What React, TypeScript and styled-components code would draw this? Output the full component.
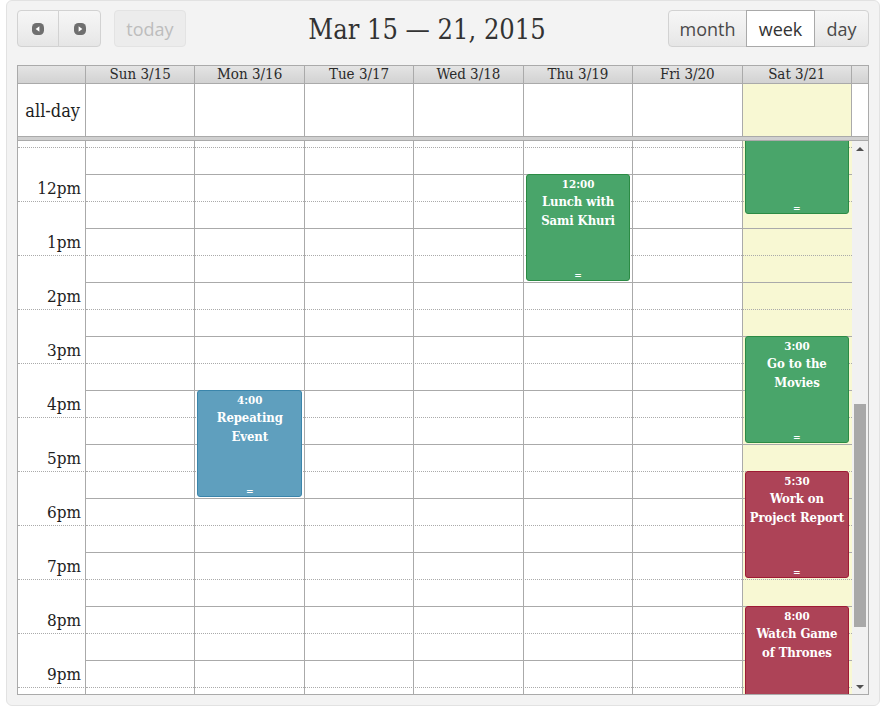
import React, { useLayoutEffect, useRef } from 'react';
import styled, { createGlobalStyle } from 'styled-components';

const SLAB = `"DejaVu Serif", "Liberation Serif", serif`;
const SANS = `"Open Sans", "DejaVu Sans", sans-serif`;

const SLOT = 27;
const HOUR = SLOT * 2;
const MIN_HOUR = 11;
const MAX_HOUR = 22;
const CONTENT_H = (MAX_HOUR - MIN_HOUR) * HOUR;
const VIEW_H = 553;
const SCROLL_TOP = 21;
const ARROW_H = 15;
const TRACK_H = VIEW_H - ARROW_H * 2;
/* scrollbar is drawn for the whole day (24h), scrolled to the same spot */
const DAY_H = 24 * HOUR;
const DAY_SCROLL = MIN_HOUR * HOUR + SCROLL_TOP;

const GlobalStyle = createGlobalStyle`
  html, body { margin: 0; padding: 0; background: #fff; }
  body { font-family: ${SLAB}; }
  * { box-sizing: border-box; }
`;

const Panel = styled.div`
  margin-left: 6px;
  width: 874px;
  height: 706px;
  background: #f3f3f3;
  border: 1px solid #e2e2e2;
  border-radius: 6px;
  padding: 9px 10px 10px 10px;
  display: flex;
  flex-direction: column;
`;

const Toolbar = styled.div`
  display: flex;
  align-items: center;
  height: 37px;
  margin-bottom: 18px;
`;

const ToolbarSide = styled.div`
  display: flex;
  align-items: center;
  gap: 13px;
`;

const ToolbarCenter = styled.div`
  flex: 1;
  display: flex;
  justify-content: center;
`;

const Title = styled.h2`
  margin: 0;
  font-family: ${SLAB};
  font-stretch: condensed;
  font-size: 27px;
  font-weight: normal;
  color: #333;
  line-height: 37px;
  padding-top: 1px;
`;

const ButtonGroup = styled.div`
  display: flex;
`;

const Button = styled.button<{ $w: number; $first?: boolean; $last?: boolean; $active?: boolean; $disabled?: boolean }>`
  width: ${p => p.$w}px;
  height: 37px;
  margin: 0;
  margin-left: ${p => (p.$first ? 0 : -1)}px;
  padding: 0;
  display: flex;
  align-items: center;
  justify-content: center;
  font-family: ${SANS};
  font-size: 18px;
  line-height: 1;
  color: ${p => (p.$disabled ? '#bdbdbd' : p.$active ? '#333' : '#4a4a4a')};
  background: ${p =>
    p.$disabled
      ? '#ececec'
      : p.$active
      ? '#fff'
      : 'linear-gradient(to bottom, #f6f6f6 0%, #efefef 50%, #e6e6e6 100%)'};
  border: 1px solid ${p => (p.$active ? '#a9a9a9' : p.$disabled ? '#e3e3e3' : '#d2d2d2')};
  position: relative;
  z-index: ${p => (p.$active ? 1 : 0)};
  border-radius: ${p => `${p.$first ? 4 : 0}px ${p.$last ? 4 : 0}px ${p.$last ? 4 : 0}px ${p.$first ? 4 : 0}px`};
`;

const Table = styled.div`
  width: 852px;
  border: 1px solid #aaa;
  background: #fff;
  display: flex;
  flex-direction: column;
`;

const HeadRow = styled.div`
  display: grid;
  grid-template-columns: 68px repeat(7, 1fr) 16px;
  height: 18px;
  border-bottom: 1px solid #aaa;
  background: linear-gradient(to bottom, #e4e4e4 0%, #d2d2d2 100%);
`;

const HeadCell = styled.div<{ $last?: boolean }>`
  border-right: ${p => (p.$last ? 'none' : '1px solid #aaa')};
  text-align: center;
  font-family: ${SLAB};
  font-stretch: condensed;
  font-size: 15px;
  line-height: 17px;
  color: #2a2a2a;
  white-space: nowrap;
  overflow: hidden;
`;

const AllDayRow = styled.div`
  display: grid;
  grid-template-columns: 68px repeat(7, 1fr) 16px;
  height: 52px;
`;

const AllDayCell = styled.div<{ $today?: boolean; $last?: boolean }>`
  border-right: ${p => (p.$last ? 'none' : '1px solid #aaa')};
  background: ${p => (p.$today ? '#f8f8d3' : '#fff')};
`;

const AxisLabel = styled.div`
  display: flex;
  align-items: center;
  justify-content: flex-end;
  padding-right: 5px;
  border-right: 1px solid #aaa;
  font-family: ${SLAB};
  font-stretch: condensed;
  font-size: 18px;
  color: #1e1e1e;
  white-space: nowrap;
`;

const Divider = styled.div`
  height: 5px;
  border-top: 1px solid #aaa;
  border-bottom: 1px solid #aaa;
  background: #d0d0d0;
`;

const Body = styled.div`
  display: flex;
  height: ${VIEW_H}px;
`;

const Scroller = styled.div`
  flex: 1;
  height: ${VIEW_H}px;
  overflow: hidden;
`;

const ScrollContent = styled.div`
  display: grid;
  height: ${CONTENT_H}px;
  & > * {
    grid-area: 1 / 1;
  }
`;

const BgColumns = styled.div`
  display: grid;
  grid-template-columns: 68px repeat(7, 1fr);
`;

const BgCell = styled.div<{ $today?: boolean; $last?: boolean }>`
  border-right: ${p => (p.$last ? 'none' : '1px solid #aaa')};
  background: ${p => (p.$today ? '#f8f8d3' : '#fff')};
`;

const Slats = styled.div`
  display: flex;
  flex-direction: column;
`;

const SlatRow = styled.div`
  display: grid;
  grid-template-columns: 68px 1fr;
  height: ${SLOT}px;
`;

const SlatAxis = styled.div<{ $major: boolean }>`
  border-top: ${p => (p.$major ? '1px solid transparent' : '1px dotted #aaa')};
  display: flex;
  align-items: center;
  justify-content: flex-end;
  padding-right: 5px;
  font-family: ${SLAB};
  font-stretch: condensed;
  font-size: 17px;
  color: #1e1e1e;
  white-space: nowrap;
`;

const SlatLine = styled.div<{ $major: boolean }>`
  border-top: 1px ${p => (p.$major ? 'solid' : 'dotted')} #aaa;
`;

const EventColumns = styled.div`
  display: grid;
  grid-template-columns: 68px repeat(7, 1fr);
`;

const EventColumn = styled.div`
  position: relative;
`;

type Tone = 'green' | 'blue' | 'red';
const palette: Record<Tone, { bg: string; border: string }> = {
  green: { bg: '#49a56a', border: '#2b8b44' },
  blue: { bg: '#5f9fbe', border: '#3a85ab' },
  red: { bg: '#ad4357', border: '#9e1a34' },
};

const EventBox = styled.div<{ $tone: Tone }>`
  position: absolute;
  left: 2px;
  right: 2.5%;
  background: ${p => palette[p.$tone].bg};
  border: 1px solid ${p => palette[p.$tone].border};
  border-radius: 3px;
  color: #fff;
  text-align: center;
  overflow: hidden;
  padding-top: 1px;
  font-family: ${SLAB};
  font-stretch: condensed;
`;

const EventTime = styled.div`
  font-size: 11.5px;
  font-weight: bold;
  line-height: 16px;
`;

const EventTitle = styled.div`
  font-size: 13px;
  font-weight: bold;
  line-height: 19px;
  letter-spacing: -0.1px;
  padding: 0 3px;
`;

const Resizer = styled.div`
  position: absolute;
  left: 0;
  right: 0;
  bottom: 0;
  height: 8px;
  line-height: 8px;
  font-size: 11px;
  font-family: "DejaVu Sans Mono", monospace;
  text-align: center;
  &::after {
    content: '=';
  }
`;

const Gutter = styled.div`
  width: 16px;
  background: #f1f1f1;
  display: flex;
  flex-direction: column;
`;

const ScrollArrow = styled.div<{ $down?: boolean }>`
  height: ${ARROW_H}px;
  display: flex;
  align-items: center;
  justify-content: center;
  &::after {
    content: '';
    width: 0;
    height: 0;
    border-left: 4px solid transparent;
    border-right: 4px solid transparent;
    ${p => (p.$down ? 'border-top: 4px solid #505050;' : 'border-bottom: 4px solid #505050;')}
  }
`;

const Track = styled.div`
  flex: 1;
  display: flex;
  flex-direction: column;
`;

const Thumb = styled.div`
  margin-left: 2px;
  width: 12px;
  background: #a8a8a8;
`;

const NavIcon: React.FC<{ dir: 'left' | 'right' }> = ({ dir }) => (
  <svg width="12" height="12" viewBox="0 0 12 12">
    <rect x="0" y="0" width="12" height="12" rx="4.5" fill="#6f6f6f" />
    {dir === 'left' ? (
      <path d="M3.6 6 L7.4 3.2 L7.4 8.8 Z" fill="#fff" />
    ) : (
      <path d="M8.4 6 L4.6 3.2 L4.6 8.8 Z" fill="#fff" />
    )}
  </svg>
);

const days = ['Sun 3/15', 'Mon 3/16', 'Tue 3/17', 'Wed 3/18', 'Thu 3/19', 'Fri 3/20', 'Sat 3/21'];
const TODAY = 6;

interface CalEvent {
  day: number;
  start: number;
  end: number;
  time?: string;
  title?: string;
  tone: Tone;
}

const events: CalEvent[] = [
  { day: 6, start: 10, end: 12.75, tone: 'green' },
  { day: 4, start: 12, end: 14, time: '12:00', title: 'Lunch with Sami Khuri', tone: 'green' },
  { day: 1, start: 16, end: 18, time: '4:00', title: 'Repeating Event', tone: 'blue' },
  { day: 6, start: 15, end: 17, time: '3:00', title: 'Go to the Movies', tone: 'green' },
  { day: 6, start: 17.5, end: 19.5, time: '5:30', title: 'Work on Project Report', tone: 'red' },
  { day: 6, start: 20, end: 22, time: '8:00', title: 'Watch Game of Thrones', tone: 'red' },
];

const hourLabel = (h: number) => {
  if (h === 0) return '12am';
  if (h === 12) return '12pm';
  return h < 12 ? `${h}am` : `${h - 12}pm`;
};

export default function App() {
  const scrollRef = useRef<HTMLDivElement>(null);
  useLayoutEffect(() => {
    if (scrollRef.current) scrollRef.current.scrollTop = SCROLL_TOP;
  }, []);

  const thumbTop = (TRACK_H * DAY_SCROLL) / DAY_H;
  const thumbH = (TRACK_H * VIEW_H) / DAY_H;
  const slotCount = (MAX_HOUR - MIN_HOUR) * 2;

  return (
    <>
      <GlobalStyle />
      <Panel>
        <Toolbar>
          <ToolbarSide>
            <ButtonGroup>
              <Button $w={42} $first>
                <NavIcon dir="left" />
              </Button>
              <Button $w={43} $last>
                <NavIcon dir="right" />
              </Button>
            </ButtonGroup>
            <Button $w={72} $first $last $disabled>
              today
            </Button>
          </ToolbarSide>
          <ToolbarCenter>
            <Title>Mar 15 — 21, 2015</Title>
          </ToolbarCenter>
          <ToolbarSide>
            <ButtonGroup>
              <Button $w={79} $first>
                month
              </Button>
              <Button $w={69} $active>
                week
              </Button>
              <Button $w={55} $last>
                day
              </Button>
            </ButtonGroup>
          </ToolbarSide>
        </Toolbar>

        <Table>
          <HeadRow>
            <HeadCell />
            {days.map(d => (
              <HeadCell key={d}>{d}</HeadCell>
            ))}
            <HeadCell $last />
          </HeadRow>

          <AllDayRow>
            <AxisLabel>all-day</AxisLabel>
            {days.map((d, i) => (
              <AllDayCell key={d} $today={i === TODAY} />
            ))}
            <AllDayCell $last />
          </AllDayRow>

          <Divider />

          <Body>
            <Scroller ref={scrollRef}>
              <ScrollContent>
                <BgColumns>
                  <BgCell />
                  {days.map((d, i) => (
                    <BgCell key={d} $today={i === TODAY} $last={i === 6} />
                  ))}
                </BgColumns>

                <Slats>
                  {Array.from({ length: slotCount }, (_, i) => {
                    const major = i % 2 === 0;
                    const hour = MIN_HOUR + i / 2;
                    return (
                      <SlatRow key={i}>
                        <SlatAxis $major={major}>{major && hour > MIN_HOUR ? hourLabel(hour) : ''}</SlatAxis>
                        <SlatLine $major={major} />
                      </SlatRow>
                    );
                  })}
                </Slats>

                <EventColumns>
                  <EventColumn />
                  {days.map((d, di) => (
                    <EventColumn key={d}>
                      {events
                        .filter(e => e.day === di)
                        .map(e => (
                          <EventBox
                            key={`${e.day}-${e.start}`}
                            $tone={e.tone}
                            style={{
                              top: (e.start - MIN_HOUR) * HOUR,
                              height: (e.end - e.start) * HOUR - 1,
                            }}
                          >
                            {e.time && <EventTime>{e.time}</EventTime>}
                            {e.title && <EventTitle>{e.title}</EventTitle>}
                            <Resizer />
                          </EventBox>
                        ))}
                    </EventColumn>
                  ))}
                </EventColumns>
              </ScrollContent>
            </Scroller>
            <Gutter>
              <ScrollArrow />
              <Track>
                <Thumb style={{ marginTop: thumbTop, height: thumbH }} />
              </Track>
              <ScrollArrow $down />
            </Gutter>
          </Body>
        </Table>
      </Panel>
    </>
  );
}
